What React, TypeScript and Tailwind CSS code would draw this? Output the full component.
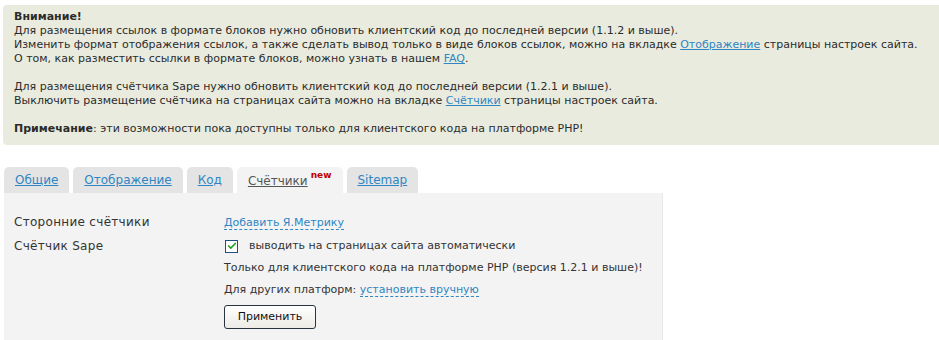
import { Check } from 'lucide-react'

const link = 'text-[#2f86c3] underline'

function Tab({ label, active, badge }: { label: string; active?: boolean; badge?: string }) {
  return (
    <div
      className={
        'h-[26px] flex items-center px-[11px] rounded-t-[5px] ' +
        (active ? 'bg-[#f3f3f3] text-[#555] pt-[2px]' : 'bg-[#e4e4e4] mt-[2px] h-[24px]')
      }
    >
      <span className={active ? 'underline' : link}>{label}</span>
      {badge && <sup className="text-[#c00000] font-bold text-[9px] ml-[3px] -mt-[4px]">{badge}</sup>}
    </div>
  )
}

export default function App() {
  return (
    <div className="w-[939px] h-[340px] overflow-hidden bg-white text-[11px] leading-[14px] text-[#2b2b2b] font-['DejaVu_Sans',Verdana,sans-serif]">
      <div className="ml-[3px] mt-[5px] h-[140px] bg-[#e9ebdf] rounded-l-[4px] pl-[11px] pt-[5px]">
        <div className="font-bold">Внимание!</div>
        <div>Для размещения ссылок в формате блоков нужно обновить клиентский код до последней версии (1.1.2 и выше).</div>
        <div>
          Изменить формат отображения ссылок, а также сделать вывод только в виде блоков ссылок, можно на вкладке{' '}
          <a className={link}>Отображение</a> страницы настроек сайта.
        </div>
        <div>
          О том, как разместить ссылки в формате блоков, можно узнать в нашем <a className={link}>FAQ</a>.
        </div>
        <div className="h-[14px]" />
        <div>Для размещения счётчика Sape нужно обновить клиентский код до последней версии (1.2.1 и выше).</div>
        <div>
          Выключить размещение счётчика на страницах сайта можно на вкладке <a className={link}>Счётчики</a> страницы
          настроек сайта.
        </div>
        <div className="h-[14px]" />
        <div>
          <b>Примечание</b>: эти возможности пока доступны только для клиентского кода на платформе PHP!
        </div>
      </div>

      <div className="ml-[4px] mt-[20px] w-[659px] text-[12px]">
        <div className="flex gap-[4px] items-end">
          <Tab label="Общие" />
          <Tab label="Отображение" />
          <Tab label="Код" />
          <Tab label="Счётчики" active badge="new" />
          <Tab label="Sitemap" />
        </div>
        <div className="bg-[#f3f3f3] border-r border-[#e8e8e8] h-[150px] pl-[10px] pt-[22px] text-[#333]">
          <div className="grid grid-cols-[210px_1fr] gap-y-[9px] leading-[14px]">
            <div className="tracking-[0.3px]">Сторонние счётчики</div>
            <div>
              <a className="text-[#2f86c3] text-[11px] border-b border-dashed border-[#2f86c3]">Добавить Я.Метрику</a>
            </div>
            <div className="tracking-[0.3px]">Счётчик Sape</div>
            <div className="flex flex-col gap-[8px] text-[11px]">
              <label className="flex items-center gap-[11px]">
                <span className="w-[13px] h-[13px] border border-[#1c5180] bg-white flex items-center justify-center ml-[1px]">
                  <Check size={10} strokeWidth={4} className="text-[#21a121]" />
                </span>
                выводить на страницах сайта автоматически
              </label>
              <div>Только для клиентского кода на платформе PHP (версия 1.2.1 и выше)!</div>
              <div>
                Для других платформ:{' '}
                <a className="text-[#2f86c3] border-b border-dashed border-[#2f86c3]">установить вручную</a>
              </div>
              <div>
                <button className="w-[92px] h-[24px] border border-[#2a3440] rounded-[3px] bg-gradient-to-b from-white to-[#ecebe6] text-[#111] text-[11px]">
                  Применить
                </button>
              </div>
            </div>
          </div>
        </div>
      </div>
    </div>
  )
}
